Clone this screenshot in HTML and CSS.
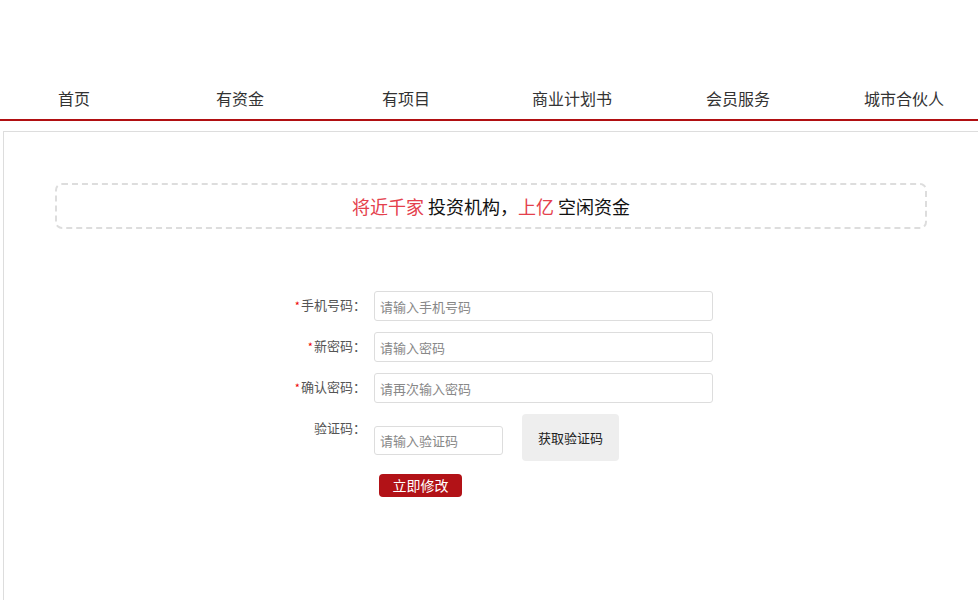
FILE: index.html
```html
<!DOCTYPE html>
<html lang="zh-CN">
<head>
<meta charset="utf-8">
<title>修改密码</title>
<link rel="stylesheet" href="styles.css">
</head>
<body>
<div class="top"></div>
<nav class="nav">
  <a class="nav-item">首页</a>
  <a class="nav-item">有资金</a>
  <a class="nav-item">有项目</a>
  <a class="nav-item">商业计划书</a>
  <a class="nav-item">会员服务</a>
  <a class="nav-item">城市合伙人</a>
</nav>
<main class="panel">
  <div class="banner">
    <span class="hl">将近千家</span> 投资机构，<span class="hl">上亿</span> 空闲资金
  </div>
  <form class="form">
    <div class="row">
      <label class="label"><i class="star">*</i>手机号码：</label>
      <input class="input" type="text" placeholder="请输入手机号码">
    </div>
    <div class="row">
      <label class="label"><i class="star">*</i>新密码：</label>
      <input class="input" type="password" placeholder="请输入密码">
    </div>
    <div class="row">
      <label class="label"><i class="star">*</i>确认密码：</label>
      <input class="input" type="password" placeholder="请再次输入密码">
    </div>
    <div class="row row-code">
      <label class="label">验证码：</label>
      <input class="input input-code" type="text" placeholder="请输入验证码">
      <button class="btn-code" type="button">获取验证码</button>
    </div>
    <div class="row row-submit">
      <button class="btn-submit" type="button">立即修改</button>
    </div>
  </form>
</main>
</body>
</html>
```
FILE: styles.css
```css
html, body {
  margin: 0;
  padding: 0;
  background: #fff;
  overflow: hidden;
}
body {
  font-family: "Noto Sans CJK SC", "Noto Sans", "Liberation Sans", sans-serif;
  color: #333;
  width: 978px;
  height: 600px;
}
.top {
  height: 80px;
}
.nav {
  display: flex;
  height: 39px;
  border-bottom: 2px solid #b10f12;
  overflow: hidden;
}
.nav-item {
  flex: 0 0 166px;
  text-align: center;
  font-size: 16px;
  line-height: 37px;
  color: #333;
  cursor: pointer;
}
.nav-item:first-child {
  margin-left: -9px;
}
.panel {
  display: block;
  margin: 10px 0 0 3px;
  width: 872px;
  height: 417px;
  border: 1px solid #ddd;
  border-right: none;
  border-bottom: none;
  padding: 51px 51px 0 51px;
}
.banner {
  height: 42px;
  border: 2px dashed #ddd;
  border-radius: 7px;
  text-align: center;
  font-size: 18px;
  line-height: 42px;
  color: #111;
}
.hl {
  color: #e4404c;
}
.form {
  margin: 62px 0 0 225px;
}
.row {
  display: flex;
  align-items: flex-start;
  height: 30px;
  margin-bottom: 11px;
}
.row-code {
  height: 47px;
}
.label {
  width: 86px;
  height: 30px;
  margin-right: 8px;
  text-align: right;
  font-size: 13px;
  line-height: 28px;
  color: #555;
}
.star {
  font-style: normal;
  color: #e00;
  font-size: 11px;
  line-height: 1;
  margin-right: 1px;
}
.input {
  box-sizing: border-box;
  width: 339px;
  height: 30px;
  border: 1px solid #ddd;
  border-radius: 3px;
  padding: 0 5px;
  font-family: inherit;
  font-size: 13px;
  color: #333;
  outline: none;
}
.input::placeholder {
  color: #888;
}
.input-code {
  width: 129px;
  height: 29px;
  margin-top: 12px;
}
.btn-code {
  margin-left: 19px;
  width: 97px;
  height: 47px;
  border: none;
  border-radius: 4px;
  background: #eee;
  font-family: inherit;
  font-size: 13px;
  color: #222;
}
.row-submit {
  margin-top: 13px;
  height: 23px;
  padding-left: 99px;
}
.btn-submit {
  width: 83px;
  height: 23px;
  border: none;
  border-radius: 4px;
  background: #b21217;
  color: #fff;
  font-family: inherit;
  font-size: 14px;
  line-height: 23px;
  padding: 0;
}
```
